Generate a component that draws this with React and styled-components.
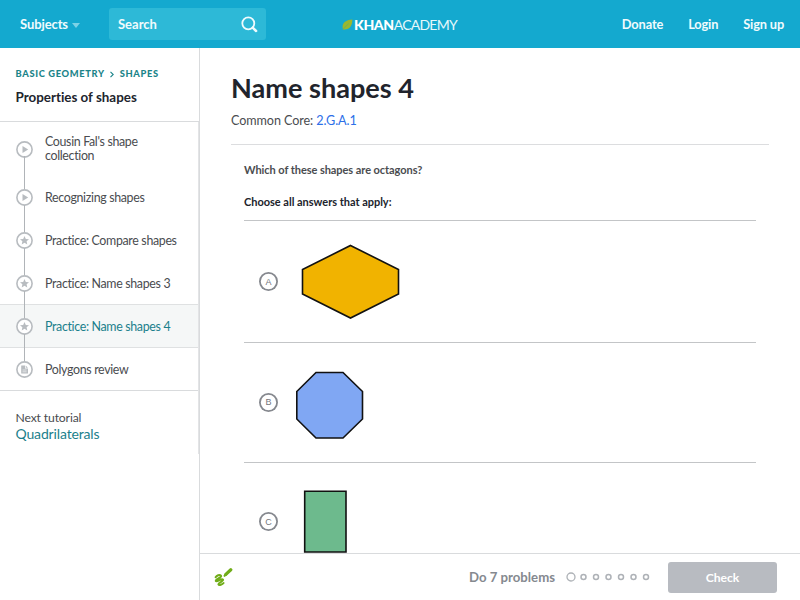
import React from 'react';
import styled, { createGlobalStyle, css } from 'styled-components';

const GlobalStyle = createGlobalStyle`
  * {
    box-sizing: border-box;
  }

  body {
    margin: 0;
    background: #fff;
    color: #4a4c50;
    font-family: Lato, 'Liberation Sans', sans-serif;
    font-variant-ligatures: none;
  }

  a {
    color: inherit;
    text-decoration: none;
  }
`;

const Page = styled.div`
  display: flex;
  flex-direction: column;
  width: 800px;
  height: 600px;
  overflow: hidden;
`;

const Header = styled.header`
  display: grid;
  grid-template-columns: 1fr auto 1fr;
  align-items: center;
  flex: none;
  height: 48px;
  padding: 0 16px 0 20px;
  background: #14a9cf;
  color: #f0fbfd;
  font-size: 13px;
  font-weight: 700;
`;

const HeaderLeft = styled.div`
  display: flex;
  align-items: center;
`;

const Subjects = styled.button`
  display: flex;
  align-items: center;
  width: 89px;
  padding: 0;
  border: 0;
  background: none;
  color: inherit;
  font: inherit;
  letter-spacing: -0.1px;
`;

const Caret = styled.span`
  margin: 2px 0 0 4px;
  border: 4px solid transparent;
  border-top: 5px solid #7dd2e6;
  border-bottom: 0;
`;

const SearchBox = styled.div`
  display: flex;
  align-items: center;
  justify-content: space-between;
  width: 157px;
  height: 32px;
  padding: 0 8px 0 9px;
  border-radius: 3px;
  background: #2db9d7;
`;

const Logo = styled.a`
  display: flex;
  align-items: center;
  margin-right: 5px;
  font-size: 14px;
  font-weight: 400;
  letter-spacing: -0.75px;
  color: #e6f8fb;

  svg {
    margin-right: 1px;
  }

  b {
    color: #fff;
    font-weight: 900;
    letter-spacing: -0.4px;
  }
`;

const HeaderLinks = styled.nav`
  display: flex;
  justify-content: flex-end;
  gap: 25px;
  font-size: 12.8px;
  letter-spacing: -0.15px;
`;

const Body = styled.div`
  display: flex;
  flex: 1;
  min-height: 0;
`;

const Sidebar = styled.aside`
  flex: none;
  width: 200px;
  border-right: 1px solid #d9dbdd;
`;

const SidebarHead = styled.div`
  height: 74px;
  padding: 20px 0 0 15.5px;
  border-bottom: 1px solid #d9dbdd;
`;

const Breadcrumb = styled.div`
  display: flex;
  align-items: center;
  gap: 5.5px;
  color: #1b8489;
  font-size: 9.3px;
  font-weight: 900;
  letter-spacing: 0.66px;
  line-height: 12px;
`;

const UnitTitle = styled.h2`
  margin: 8px 0 0;
  color: #21242c;
  font-size: 13.4px;
  line-height: 18px;
`;

const SidebarContent = styled.div`
  height: 332px;
  border-right: 1px solid #e3e4e6;
`;

const Lessons = styled.ul`
  margin: 0;
  padding: 0;
  box-shadow: inset 0 -1px #d9dbdd;
  list-style: none;
`;

const Lesson = styled.li`
  position: relative;
  display: flex;
  align-items: center;
  height: ${({ $tall }) => ($tall ? '54px' : '43px')};
  padding-left: 16px;
  font-size: 12.4px;
  letter-spacing: -0.33px;
  line-height: 14px;

  svg {
    flex: none;
    margin-right: 12px;
  }

  ${({ $active }) =>
    $active &&
    css`
      background: #f5f7f7;
      box-shadow: 0 -1px #dfe1e2, inset 0 -1px #dfe1e2;
      color: #1b7f8c;
    `}
`;

// Runs from the bottom of one badge to the top of the next
const Connector = styled.span`
  position: absolute;
  z-index: 1;
  top: calc(50% + 7px);
  left: 24px;
  width: 1px;
  height: ${({ $tall }) => ($tall ? '33px' : '27px')};
  background: #b0b4b8;
`;

const LessonName = styled.span`
  width: 145px;
  padding-right: ${({ $tall }) => ($tall ? '25px' : 0)};
`;

const NextTutorial = styled.div`
  padding: 19px 0 0 15.5px;
  font-size: 12.2px;
  letter-spacing: -0.15px;
  line-height: 16px;

  a {
    display: block;
    color: #1b7f8c;
    font-size: 14px;
  }
`;

const Main = styled.main`
  display: flex;
  flex: 1;
  flex-direction: column;
  min-width: 0;
`;

const Exercise = styled.section`
  flex: 1;
  min-height: 0;
  overflow: hidden;
  padding: 22px 31px 0;
`;

const Title = styled.h1`
  margin: 0;
  color: #21242c;
  font-size: 27.1px;
  line-height: 36px;
`;

const Standard = styled.div`
  height: 39px;
  padding-top: 6px;
  border-bottom: 1px solid #dcdddf;
  font-size: 12.6px;
  letter-spacing: -0.08px;
  line-height: 18px;

  a {
    color: #2d6fe8;
  }
`;

const Question = styled.div`
  padding: 17px 13px 0;
  font-size: 11px;
  font-weight: 700;
  letter-spacing: -0.06px;
  line-height: 16px;

  p {
    margin: 0 0 15px;
  }
`;

const Instruction = styled.div`
  height: 28px;
  padding-top: 1px;
  border-bottom: 1px solid #c3c5c7;
  color: #21242c;
  letter-spacing: -0.02px;
`;

const Choice = styled.div`
  display: flex;
  align-items: center;
  height: ${({ $height }) => $height}px;
  padding-left: 15px;
  border-bottom: 1px solid #c3c5c7;
`;

const Letter = styled.span`
  display: flex;
  flex: none;
  align-items: center;
  justify-content: center;
  width: 19px;
  height: 19px;
  margin-right: 18px;
  border-radius: 50%;
  box-shadow: inset 0 0 0 1.8px #85888e;
  color: #73767c;
  font-family: 'Liberation Sans', sans-serif;
  font-size: 9px;
  font-weight: 400;
`;

const Footer = styled.footer`
  display: flex;
  align-items: center;
  flex: none;
  height: 47px;
  padding: 0 23px 0 13px;
  border-top: 1px solid #d9dbdd;
`;

const Goal = styled.span`
  margin-left: auto;
  color: #85898f;
  font-size: 13.2px;
  font-weight: 700;
`;

const ProgressDots = styled.svg`
  margin: 0 17px 0 11px;
`;

const CheckButton = styled.button`
  width: 109px;
  height: 31px;
  padding: 0;
  border: 0;
  border-radius: 3px;
  background: #b8bbc1;
  color: #fff;
  font: 700 12.2px Lato, sans-serif;
  letter-spacing: -0.1px;
`;

const glyphs = {
  video: <path d="M6.5 5 L12.2 8.5 L6.5 12Z" />,
  practice: (
    <path d="M8.5 4 L9.8 6.9 L13 7.2 L10.6 9.3 L11.3 12.4 L8.5 10.8 L5.7 12.4 L6.4 9.3 L4 7.2 L7.2 6.9Z" />
  ),
  article: (
    <>
      <path d="M5.2 4.5 H9 V7.5 H12 V12.5 H5.2Z M9.7 4.6 L11.9 6.8 H9.7Z" />
      <path d="M6.5 9 H10.6 M6.5 10.8 H10.6" stroke="#fff" strokeWidth="0.6" />
    </>
  ),
};

const LessonIcon = ({ type }) => (
  <svg width="17" height="17" viewBox="0 0 17 17" fill="#b8bcc0">
    <circle cx="8.5" cy="8.5" r="7.6" fill="#fff" stroke="#b8bcc0" strokeWidth="1.6" />
    {glyphs[type]}
  </svg>
);

const SearchIcon = () => (
  <svg width="17" height="17" viewBox="0 0 17 17" fill="none" stroke="#effbfd">
    <circle cx="7.3" cy="7.3" r="6" strokeWidth="1.8" />
    <path d="M11.7 11.7 L15.1 15" strokeWidth="2.5" strokeLinecap="round" />
  </svg>
);

const Leaf = () => (
  <svg width="11" height="11" viewBox="0 0 11 11">
    <path d="M1 10.5 C-1 4 4 .8 10.3 .5 C10.5 6.5 7.5 11.4 1 10.5Z" fill="#9bb72f" />
    <path d="M.7 10.5 Q4 6.8 6.8 4.5" fill="none" stroke="#5caf72" strokeWidth=".7" />
  </svg>
);

const ScratchpadIcon = () => (
  <svg width="20" height="20" viewBox="0 0 20 20" fill="none" stroke="#71ad19" strokeLinecap="round">
    <path
      d="M2.6 10.2 C3.6 8.6 6.6 7.2 8 8.6 C9.4 10.6 2 12 2.8 14 C3.8 15.8 8.4 10.8 10 12.6 C11 14.4 5 15.6 5.4 17.4 C6 18.8 9.4 17.6 10.6 16"
      strokeWidth="2"
    />
    <path d="M12.8 7.4 L17.8 2.8" strokeWidth="3.2" />
    <path d="M11.6 8.8 L13.4 7.2" strokeWidth="2.2" />
  </svg>
);

const Progress = () => (
  <ProgressDots width="85" height="12" fill="none" stroke="#aeb2b7">
    <circle cx="5" cy="6" r="4" strokeWidth="1.3" />
    {[1, 2, 3, 4, 5, 6].map(n => (
      <circle key={n} cx={5 + n * 12.5} cy="6" r="2.5" strokeWidth="1.5" />
    ))}
  </ProgressDots>
);

const lessons = [
  { name: "Cousin Fal's shape collection", type: 'video', tall: true },
  { name: 'Recognizing shapes', type: 'video' },
  { name: 'Practice: Compare shapes', type: 'practice' },
  { name: 'Practice: Name shapes 3', type: 'practice' },
  { name: 'Practice: Name shapes 4', type: 'practice', active: true },
  { name: 'Polygons review', type: 'article' },
];

const choices = [
  {
    letter: 'A',
    height: 122,
    width: 110,
    color: '#f1b300',
    points: '54.5,24.5 102.5,48.5 102.5,73 54.5,97 6.5,73 6.5,48.5',
  },
  {
    letter: 'B',
    height: 119.5,
    width: 80,
    color: '#80a7f3',
    points: '20,29.5 47,29.5 66.5,48.5 66.5,76 47,95 20,95 0.8,76 0.8,48.5',
  },
  {
    letter: 'C',
    height: 119,
    width: 80,
    color: '#6dba8d',
    points: '8.7,29.2 50,29.2 50,90 8.7,90',
  },
];

const App = () => (
  <>
    <GlobalStyle />
    <Page>
      <Header>
        <HeaderLeft>
          <Subjects>
            Subjects
            <Caret />
          </Subjects>
          <SearchBox>
            Search
            <SearchIcon />
          </SearchBox>
        </HeaderLeft>
        <Logo href="#">
          <Leaf />
          <span>
            <b>KHAN</b>ACADEMY
          </span>
        </Logo>
        <HeaderLinks>
          <a href="#">Donate</a>
          <a href="#">Login</a>
          <a href="#">Sign up</a>
        </HeaderLinks>
      </Header>
      <Body>
        <Sidebar>
          <SidebarHead>
            <Breadcrumb>
              <span>BASIC GEOMETRY</span>
              <svg width="4" height="7" viewBox="0 0 4 7" fill="none" stroke="#1b8489">
                <path d="M.5 .8 L3.2 3.5 L.5 6.2" strokeWidth="1.1" />
              </svg>
              <span>SHAPES</span>
            </Breadcrumb>
            <UnitTitle>Properties of shapes</UnitTitle>
          </SidebarHead>
          <SidebarContent>
            <Lessons>
              {lessons.map(({ name, type, tall, active }, i) => (
                <Lesson key={name} $tall={tall} $active={active}>
                  <LessonIcon type={type} />
                  <LessonName $tall={tall}>{name}</LessonName>
                  {i < lessons.length - 1 && <Connector $tall={tall} />}
                </Lesson>
              ))}
            </Lessons>
            <NextTutorial>
              Next tutorial
              <a href="#">Quadrilaterals</a>
            </NextTutorial>
          </SidebarContent>
        </Sidebar>
        <Main>
          <Exercise>
            <Title>Name shapes 4</Title>
            <Standard>
              Common Core: <a href="#">2.G.A.1</a>
            </Standard>
            <Question>
              <p>Which of these shapes are octagons?</p>
              <Instruction>Choose all answers that apply:</Instruction>
              {choices.map(({ letter, height, width, color, points }) => (
                <Choice key={letter} $height={height}>
                  <Letter>{letter}</Letter>
                  <svg width={width} height={height}>
                    <polygon points={points} fill={color} stroke="#111" strokeWidth="1.6" />
                  </svg>
                </Choice>
              ))}
            </Question>
          </Exercise>
          <Footer>
            <ScratchpadIcon />
            <Goal>Do 7 problems</Goal>
            <Progress />
            <CheckButton>Check</CheckButton>
          </Footer>
        </Main>
      </Body>
    </Page>
  </>
);

export default App;
